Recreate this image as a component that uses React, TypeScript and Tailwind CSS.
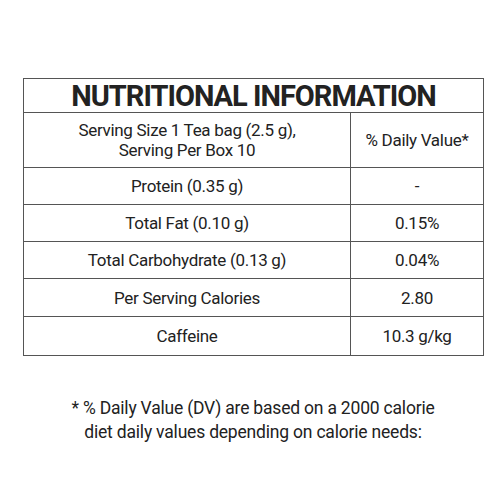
import React from 'react';

const rows: { label: string; value: string; h: string }[] = [
  { label: 'Protein (0.35 g)', value: '-', h: 'h-[37px]' },
  { label: 'Total Fat (0.10 g)', value: '0.15%', h: 'h-[37px]' },
  { label: 'Total Carbohydrate (0.13 g)', value: '0.04%', h: 'h-[37px]' },
  { label: 'Per Serving Calories', value: '2.80', h: 'h-[38px]' },
  { label: 'Caffeine', value: '10.3 g/kg', h: 'h-[38px]' },
];

export default function App() {
  return (
    <div
      className="w-[500px] h-[500px] bg-white text-[#222] flex flex-col items-start pt-[78px]"
      style={{ fontFamily: "'Roboto', 'Liberation Sans', sans-serif" }}
    >
      <div className="ml-[23px] w-[461px] border border-[#555]">
        {/* title */}
        <div className="h-[34px] border-b border-[#555] flex items-center justify-center">
          <h1 className="text-[29px] font-bold tracking-[-1px] leading-none text-[#222] pt-[2px]">
            NUTRITIONAL INFORMATION
          </h1>
        </div>

        <div className="grid grid-cols-[327px_1fr] text-[17px] leading-[20px] tracking-[-0.3px]">
          <div className="h-[55px] border-b border-r border-[#555] flex flex-col items-center justify-center text-center">
            <span>Serving Size 1 Tea bag (2.5 g),</span>
            <span>Serving Per Box 10</span>
          </div>
          <div className="h-[55px] border-b border-[#555] flex items-center justify-center">
            % Daily Value*
          </div>

          {rows.map((r, i) => {
            const last = i === rows.length - 1;
            return (
              <React.Fragment key={r.label}>
                <div
                  className={`${r.h} border-r border-[#555] flex items-center justify-center ${last ? '' : 'border-b'}`}
                >
                  {r.label}
                </div>
                <div className={`${r.h} border-[#555] flex items-center justify-center ${last ? '' : 'border-b'}`}>
                  {r.value}
                </div>
              </React.Fragment>
            );
          })}
        </div>
      </div>

      <div className="w-full mt-[40px] text-center text-[17.5px] leading-[24px] tracking-[-0.2px] text-[#222] pl-[6px]">
        <p>* % Daily Value (DV) are based on a 2000 calorie</p>
        <p>diet daily values depending on calorie needs:</p>
      </div>
    </div>
  );
}
